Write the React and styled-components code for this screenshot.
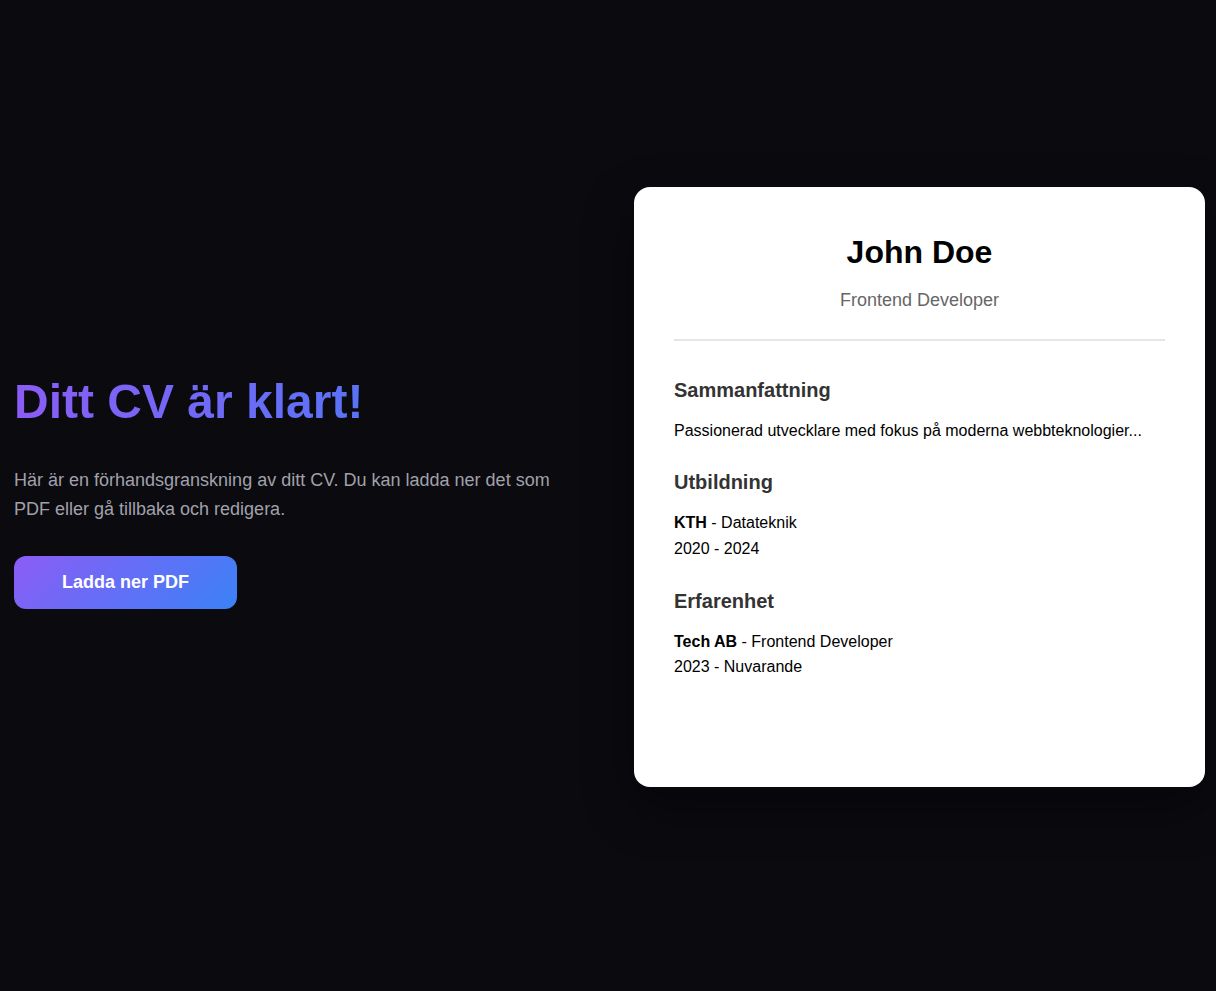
import React from "react"
import styled, { createGlobalStyle } from "styled-components"

const GlobalStyle = createGlobalStyle`
  * { box-sizing: border-box; }
  body {
    margin: 0;
    background: #0a0a0f;
    font-family: "Liberation Sans", Arial, sans-serif;
  }
`

const App = () => {
  return (
    <>
      <GlobalStyle />
      <Page>
        <Intro>
          <Title>Ditt CV är klart!</Title>
          <Lead>
            Här är en förhandsgranskning av ditt CV. Du kan ladda ner det som PDF eller gå tillbaka och redigera.
          </Lead>
          <DownloadButton>Ladda ner PDF</DownloadButton>
        </Intro>
        <Card>
          <CardHeader>
            <Name>John Doe</Name>
            <Role>Frontend Developer</Role>
          </CardHeader>
          <Section>
            <SectionTitle>Sammanfattning</SectionTitle>
            <Text>Passionerad utvecklare med fokus på moderna webbteknologier...</Text>
          </Section>
          <Section>
            <SectionTitle>Utbildning</SectionTitle>
            <Text>
              <strong>KTH</strong> - Datateknik
              <br />
              2020 - 2024
            </Text>
          </Section>
          <Section>
            <SectionTitle>Erfarenhet</SectionTitle>
            <Text>
              <strong>Tech AB</strong> - Frontend Developer
              <br />
              2023 - Nuvarande
            </Text>
          </Section>
        </Card>
      </Page>
    </>
  )
}
export default App

const Page = styled.div`
  min-height: 991px;
  display: grid;
  grid-template-columns: 1fr 571px;
  gap: 64px;
  align-items: center;
  padding: 0 11px 0 14px;
`

const Intro = styled.div`
  margin-bottom: 9px;
`

const Title = styled.h1`
  margin: 0 0 35px;
  font-size: 48px;
  font-weight: 700;
  line-height: 1.2;
  background: linear-gradient(90deg, #8b5cf6, #3b82f6);
  -webkit-background-clip: text;
  background-clip: text;
  color: transparent;
`

const Lead = styled.p`
  margin: 0 0 32px;
  font-size: 18px;
  line-height: 1.6;
  color: #a1a1aa;
`

const DownloadButton = styled.button`
  display: inline-block;
  border: none;
  border-radius: 12px;
  padding: 16px 48px;
  font-family: inherit;
  font-size: 18px;
  font-weight: 700;
  color: #fff;
  background: linear-gradient(135deg, #8b5cf6, #3b82f6);
  cursor: pointer;
`

const Card = styled.div`
  height: 600px;
  margin-bottom: 18px;
  background: #fff;
  border-radius: 16px;
  padding: 46px 40px;
  box-shadow: 0 20px 50px rgba(0, 0, 0, 0.35);
`

const CardHeader = styled.div`
  text-align: center;
  padding-bottom: 28px;
  border-bottom: 2px solid #e5e5e5;
  margin-bottom: 38px;
`

const Name = styled.h2`
  margin: 0 0 19px;
  font-size: 32px;
  line-height: 1.2;
  font-weight: 700;
  color: #000;
`

const Role = styled.div`
  font-size: 18px;
  color: #666;
`

const Section = styled.div`
  margin-bottom: 28px;
`

const SectionTitle = styled.h3`
  margin: 0 0 16px;
  font-size: 20px;
  font-weight: 700;
  color: #333;
`

const Text = styled.p`
  margin: 0;
  font-size: 16px;
  line-height: 1.6;
  color: #000;
`
